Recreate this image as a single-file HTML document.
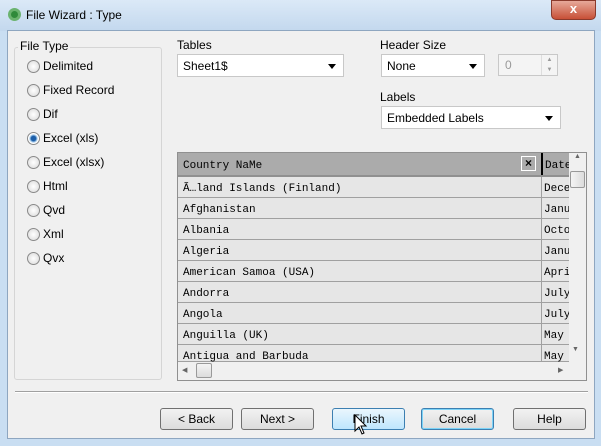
<!DOCTYPE html>
<html><head><style>
*{box-sizing:border-box;margin:0;padding:0}
body{width:601px;height:446px;overflow:hidden;background:#c9def2;font-family:"Liberation Sans",sans-serif;font-size:12px;color:#000;position:relative}
.a{position:absolute}
.title{left:0;top:0;width:601px;height:31px;background:linear-gradient(#dbe9f7,#c3d8ee)}
.client{left:7px;top:30px;width:588px;height:409px;background:#f0f0f0;border:1px solid #8ea6c0}
.combo{background:#fff;border:1px solid #c8c8c8;height:23px;padding:4px 0 0 5px}
.combo:after{content:"";position:absolute;right:7px;top:9px;border:4px solid transparent;border-top:5px solid #000}
.radio{left:27px;width:13px;height:13px;border-radius:50%;border:1px solid #8a8a8a;background:radial-gradient(#fff,#d8d8d8)}
.rl{left:43px}
.btn{top:408px;width:73px;height:22px;border:1px solid #707070;border-radius:3px;background:linear-gradient(#f2f2f2,#dcdcdc);text-align:center;padding-top:3px}
.row{left:178px;width:391px;height:21px;border-bottom:1px solid #a0a0a0;background:#e6e6e6;font-family:"Liberation Mono",monospace;font-size:11px;padding:6px 0 0 5px}
.row span{position:absolute;left:363px;top:0;height:20px;border-left:1px solid #a0a0a0;padding:6px 0 0 2px;width:28px;overflow:hidden;white-space:nowrap}
</style></head><body>
<div class="a title"></div>
<div class="a" style="left:8px;top:8px;width:13px;height:13px;border-radius:50%;background:#2f8a3a;border:3px solid #6bb36f"></div>
<div class="a" style="left:26px;top:8px;font-size:12px">File Wizard : Type</div>
<div class="a" style="left:551px;top:0;width:45px;height:20px;border-radius:0 0 5px 5px;background:linear-gradient(#e7a99a,#c75037);border:1px solid #8a3a2c;color:#fff;text-align:center;font-weight:bold;font-size:13px">x</div>
<div class="a client"></div>
<div class="a" style="left:14px;top:47px;width:148px;height:333px;border:1px solid #d5d5d5;border-radius:3px"></div>
<div class="a" style="left:18px;top:39px;background:#f0f0f0;padding:0 2px">File Type</div>
<div class="a radio" style="top:60px"></div><div class="a rl" style="top:59px">Delimited</div>
<div class="a radio" style="top:84px"></div><div class="a rl" style="top:83px">Fixed Record</div>
<div class="a radio" style="top:108px"></div><div class="a rl" style="top:107px">Dif</div>
<div class="a radio" style="top:132px;background:radial-gradient(#1b5ea8 30%,#9cc4e8 45%,#fff 60%)"></div><div class="a rl" style="top:131px">Excel (xls)</div>
<div class="a radio" style="top:156px"></div><div class="a rl" style="top:155px">Excel (xlsx)</div>
<div class="a radio" style="top:180px"></div><div class="a rl" style="top:179px">Html</div>
<div class="a radio" style="top:204px"></div><div class="a rl" style="top:203px">Qvd</div>
<div class="a radio" style="top:228px"></div><div class="a rl" style="top:227px">Xml</div>
<div class="a radio" style="top:252px"></div><div class="a rl" style="top:251px">Qvx</div>
<div class="a" style="left:177px;top:38px">Tables</div>
<div class="a combo" style="left:177px;top:54px;width:167px">Sheet1$</div>
<div class="a" style="left:380px;top:38px">Header Size</div>
<div class="a combo" style="left:381px;top:54px;width:104px">None</div>
<div class="a" style="left:498px;top:54px;width:60px;height:22px;border:1px solid #c8c8c8;background:#f4f4f4;color:#999;padding:3px 0 0 6px">0</div>
<div class="a" style="left:541px;top:55px;width:16px;height:20px;border-left:1px solid #ddd;font-size:6px;color:#999;text-align:center;line-height:10px">▲<br>▼</div>
<div class="a" style="left:380px;top:90px">Labels</div>
<div class="a combo" style="left:381px;top:106px;width:180px">Embedded Labels</div>
<div class="a" style="left:177px;top:152px;width:410px;height:229px;border:1px solid #909090;background:#f0f0f0"></div>
<div class="a" style="left:178px;top:153px;width:391px;height:24px;background:#ababab;border-bottom:2px solid #909090;font-family:'Liberation Mono',monospace;font-size:11px;padding:7px 0 0 5px">Country NaMe
<span class="a" style="left:343px;top:3px;width:15px;height:15px;border:1px solid #fff;text-align:center;font-family:'Liberation Sans';font-weight:bold;font-size:12px;line-height:13px">×</span>
<span class="a" style="left:363px;top:0;height:22px;border-left:2px solid #000;padding:7px 0 0 2px;width:28px;overflow:hidden">Date</span></div>
<div class="a row" style="top:177px">Ã…land Islands (Finland)<span>Dece</span></div>
<div class="a row" style="top:198px">Afghanistan<span>Janu</span></div>
<div class="a row" style="top:219px">Albania<span>Octo</span></div>
<div class="a row" style="top:240px">Algeria<span>Janu</span></div>
<div class="a row" style="top:261px">American Samoa (USA)<span>Apri</span></div>
<div class="a row" style="top:282px">Andorra<span>July</span></div>
<div class="a row" style="top:303px">Angola<span>July</span></div>
<div class="a row" style="top:324px">Anguilla (UK)<span>May</span></div>
<div class="a row" style="top:345px;height:17px">Antigua and Barbuda<span style="height:17px">May</span></div>
<div class="a" style="left:569px;top:153px;width:17px;height:209px;background:#f0f0f0;font-size:7px;color:#666;text-align:center">▲</div>
<div class="a" style="left:570px;top:171px;width:15px;height:17px;border:1px solid #999;border-radius:2px;background:linear-gradient(90deg,#f4f4f4,#dcdcdc)"></div>
<div class="a" style="left:572px;top:346px;font-size:7px;color:#666">▼</div>
<div class="a" style="left:178px;top:362px;width:391px;height:18px;background:#f0f0f0"></div>
<div class="a" style="left:182px;top:366px;font-size:7px;color:#666">◀</div>
<div class="a" style="left:196px;top:363px;width:16px;height:15px;border:1px solid #999;border-radius:2px;background:linear-gradient(#f4f4f4,#dcdcdc)"></div>
<div class="a" style="left:558px;top:366px;font-size:7px;color:#666">▶</div>
<div class="a" style="left:15px;top:391px;width:573px;height:2px;border-top:1px solid #a0a0a0;border-bottom:1px solid #fff"></div>
<div class="a btn" style="left:160px">&lt; Back</div>
<div class="a btn" style="left:241px">Next &gt;</div>
<div class="a btn" style="left:332px;border-color:#3c7fb1;background:linear-gradient(#eaf6fd,#bee6fd)">Finish</div>
<div class="a btn" style="left:421px;border-color:#3c7fb1;box-shadow:inset 0 0 0 1px #7dd3f7">Cancel</div>
<div class="a btn" style="left:513px">Help</div>
<svg class="a" style="left:354px;top:414px" width="14" height="22" viewBox="0 0 14 22"><path d="M1 1 L1 17 L5 13 L8 20 L10 19 L7 12 L12 12 Z" fill="#fff" stroke="#000"/></svg>
</body></html>
